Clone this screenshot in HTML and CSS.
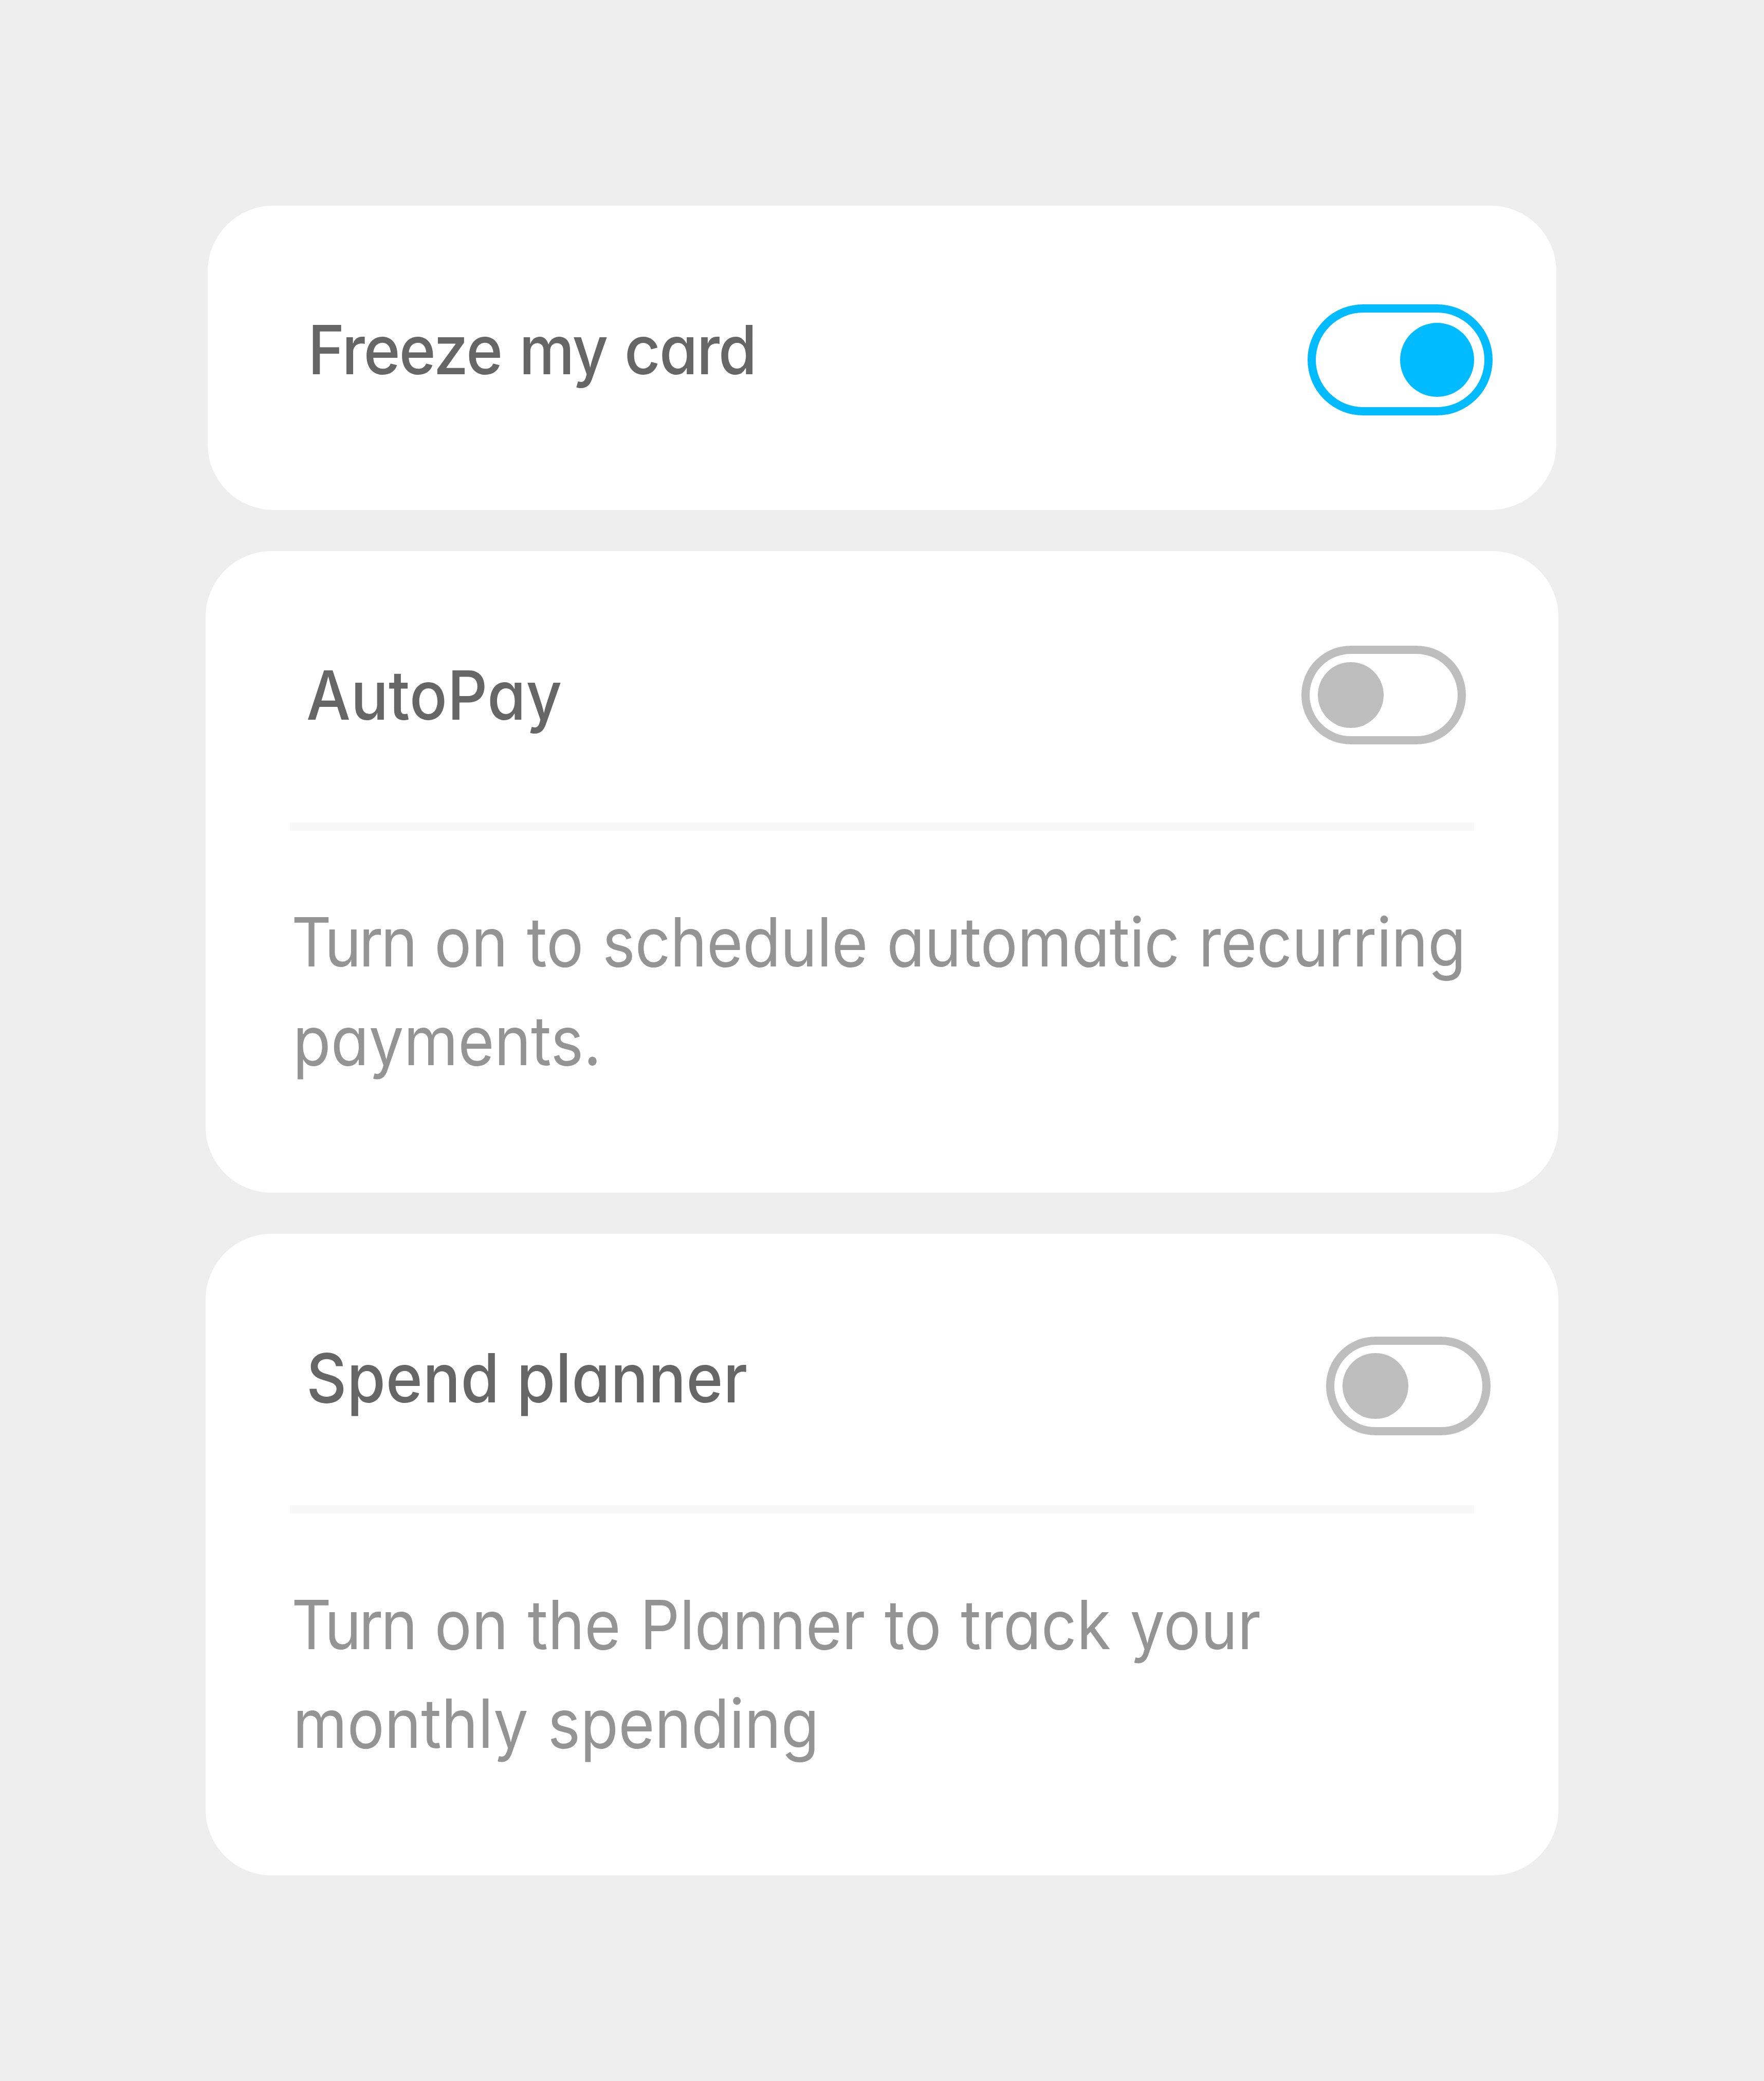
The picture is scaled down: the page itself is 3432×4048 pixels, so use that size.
FILE: index.html
```
<!DOCTYPE html>
<html lang="en">
<head>
    <meta charset="UTF-8">
    <meta name="viewport" content="width=device-width, initial-scale=1.0">
    <title>Card Settings</title>
    <link rel="stylesheet" href="styles.css">
</head>
<body>
    <div class="container">
        <!-- Freeze card -->
        <div class="card card-freeze">
            <div class="card-header">
                <h2>Freeze my card</h2>
                <div class="toggle toggle-on"><div class="knob"></div></div>
            </div>
        </div>

        <!-- AutoPay -->
        <div class="card card-autopay">
            <div class="card-header">
                <h2>AutoPay</h2>
                <div class="toggle"><div class="knob"></div></div>
            </div>
            <div class="divider"></div>
            <p>
                <span class="line"><span class="tight">Turn</span> on to schedule automatic recurring</span>
                <span class="line last">payments.</span>
            </p>
        </div>

        <!-- Spend planner -->
        <div class="card card-planner">
            <div class="card-header">
                <h2>Spend planner</h2>
                <div class="toggle"><div class="knob"></div></div>
            </div>
            <div class="divider"></div>
            <p>
                <span class="line"><span class="tight">Turn</span> on the Planner to track your</span>
                <span class="line last">monthly spending</span>
            </p>
        </div>
    </div>
</body>
</html>
```
FILE: styles.css
```
body {
    margin: 0;
    background-color: #eeeeee;
    font-family: Inter, "Liberation Sans", sans-serif;
    font-size: 132px;
    font-feature-settings: "cv11";
}

.container {
    box-sizing: border-box;
    width: 3432px;
    height: 4048px;
    padding: 400px;
    display: flex;
    flex-direction: column;
    gap: 80px;
}

.card {
    box-sizing: border-box;
    height: 1248px;
    padding-top: 184px;
    background-color: #fff;
    border-radius: 128px;
}

.card-freeze {
    height: 592px;
    margin: 0 4px;
}

.card-header {
    box-sizing: border-box;
    height: 344px;
    padding-left: 196px;
    display: flex;
    justify-content: space-between;
    align-items: flex-start;
}

h2 {
    margin: 16px 0 0;
    font-size: 132px;
    font-weight: 500;
    line-height: 160px;
    color: #666;
    white-space: nowrap;
    transform: scaleX(0.92);
    transform-origin: left;
}

.divider {
    height: 16px;
    margin: 0 164px;
    background-color: #f7f7f7;
}

p {
    margin: 120px 167px 0;
    font-weight: 400;
    line-height: 192px;
    color: #949494;
    white-space: nowrap;
    word-spacing: 4px;
    transform: scaleX(0.915);
    transform-origin: left;
}

.line {
    display: block;
}

.tight {
    letter-spacing: -5px;
}

.last {
    margin-left: 3px;
    letter-spacing: 0;
}

/* Toggle switch */
.toggle {
    box-sizing: border-box;
    width: 320px;
    height: 192px;
    padding: 16px;
    border: 16px solid #bebebe;
    border-radius: 96px;
    display: flex;
}

.knob {
    width: 128px;
    height: 128px;
    border-radius: 50%;
    background-color: #bebebe;
}

.toggle-on {
    width: 360px;
    height: 216px;
    padding: 20px;
    border-color: #00bbff;
    border-radius: 108px;
    justify-content: flex-end;
}

.toggle-on .knob {
    width: 144px;
    height: 144px;
    background-color: #00bbff;
}

/* Per card spacing */
.card-freeze .card-header {
    padding-left: 195px;
    padding-right: 124px;
}

.card-freeze h2 {
    letter-spacing: -2.5px;
    word-spacing: 4px;
}

.card-freeze .toggle {
    margin-top: 8px;
}

.card-autopay .card-header {
    padding-right: 180px;
}

.card-autopay h2 {
    letter-spacing: 0.5px;
}

.card-autopay p {
    letter-spacing: -0.5px;
}

.card-planner .card-header {
    padding-right: 132px;
}

.card-planner h2 {
    letter-spacing: 0.7px;
}

.card-planner p {
    letter-spacing: -0.1px;
}

.card-planner .toggle {
    margin-top: 16px;
}
```
